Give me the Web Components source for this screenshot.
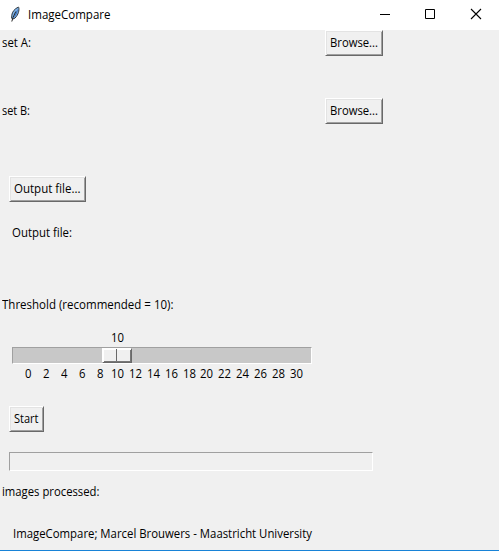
<!DOCTYPE html>
<html lang="en"><head><meta charset="utf-8"><title>ImageCompare</title>
<style>body{margin:0;background:#f0f0f0}</style></head>
<body><image-compare></image-compare>
<script>
const root=(el,html)=>{const t=document.createElement('template');t.innerHTML=html;
  el.attachShadow({mode:'open'}).append(t.content.cloneNode(true));return el.shadowRoot;};

// One line of text condensed to the advance width given in "w".
class FitText extends HTMLElement{
  connectedCallback(){
    if(this.shadowRoot)return;
    const w=+this.getAttribute('w');
    const r=root(this,`<style>:host{display:flex;align-items:center;height:20px;width:${w}px;flex:none}
      span{white-space:pre;flex:none;transform-origin:0 50%;line-height:20px}</style><span></span>`);
    const s=r.querySelector('span');s.textContent=this.getAttribute('text');
    const n=s.getBoundingClientRect().width;
    if(n)s.style.transform=`scaleX(${w/n})`;
  }
}
// Raised classic push button.
class TkButton extends HTMLElement{
  connectedCallback(){
    if(this.shadowRoot)return;
    root(this,`<style>:host{display:block;flex:none}
      button{display:flex;align-items:center;justify-content:flex-start;box-sizing:border-box;font:inherit;color:inherit;
       width:${this.getAttribute('w')}px;height:26px;margin:0;padding:0 0 0 4px;background:#f0f0f0;
       border:1px solid;border-color:#fff #696969 #696969 #fff;box-shadow:inset 1px 1px #e3e3e3,inset -1px -1px #a0a0a0}</style>
      <button><slot></slot></button>`);
  }
}
class TitleBar extends HTMLElement{
  connectedCallback(){
    if(this.shadowRoot)return;
    root(this,`<style>:host{display:flex;height:30px;background:#fff;align-items:center}
      .feather{margin-left:7px;margin-right:5px}.buttons{margin-left:auto;display:flex}svg{display:block}</style>
      <svg class="feather" width="16" height="18" viewBox="0 0 16 18">
       <path d="M11.2 1.2C7.8 2.6 5 6 4.8 9.2L4.6 12l1 1.1 2.4-1C11.5 8.5 12.3 4.5 11.8 1.4Z" fill="#7db2e8" stroke="#303840" stroke-width="1"/>
       <path d="M11 3C10.7 6.5 9.3 9.2 6.8 12L9.6 5Z" fill="#386fbd"/>
       <path d="M8.8 5.5L6 11.5 4.8 15.5" fill="none" stroke="#222" stroke-width="1"/></svg>
      <fit-text text="ImageCompare" w="82.5"></fit-text>
      <div class="buttons">
      <svg width="46" height="30"><path d="M18 14.5h10" stroke="#000"/></svg>
      <svg width="46" height="30"><path d="M17.5 9.5h9v9h-9z" fill="none" stroke="#000"/></svg>
      <svg width="45" height="30"><path d="M17 9l10 10M27 9l-10 10" fill="none" stroke="#000" stroke-width="1.1"/></svg></div>`);
  }
}
class TkScale extends HTMLElement{
  connectedCallback(){
    if(this.shadowRoot)return;
    const ticks=Array.from({length:16},(_,i)=>`<div><fit-text text="${i*2}" w="${i<5?6.5:13}"></fit-text></div>`).join('');
    root(this,`<style>:host{display:block;width:300px;margin-left:12px}
      .value{height:19px;padding-left:98.5px;display:flex;align-items:center}
      .trough{box-sizing:border-box;height:17px;background:#c8c8c8;border:1px solid;border-color:#a0a0a0 #fff #fff #a0a0a0;padding-left:89px}
      .thumb{box-sizing:border-box;width:30px;height:15px;background:#f0f0f0;border:1px solid;border-color:#fff #696969 #696969 #fff;
        box-shadow:inset 1px 1px #fff,inset -1px -1px #777;display:flex;padding-left:13px}
      .thumb i{width:1px;height:12px;background:#696969}
      .ticks{display:grid;grid-template-columns:repeat(16,17.87px);margin-left:7.4px;height:20px}
      .ticks div{display:flex;justify-content:center}</style>
      <div class="value"><fit-text text="10" w="13"></fit-text></div>
      <div class="trough"><div class="thumb"><i></i></div></div><div class="ticks">${ticks}</div>`);
  }
}
class TkProgress extends HTMLElement{
  connectedCallback(){
    if(this.shadowRoot)return;
    root(this,`<style>:host{display:block;box-sizing:border-box;width:364px;height:19px;margin:20px 0 11px 9px;
      border:1px solid;border-color:#a0a0a0 #fff #fff #a0a0a0}</style>`);
  }
}
class ImageCompare extends HTMLElement{
  connectedCallback(){
    if(this.shadowRoot)return;
    root(this,`<style>:host{display:flex;flex-direction:column;box-sizing:border-box;width:499px;height:551px;overflow:hidden;
       background:#f0f0f0;border-bottom:1px solid #1883d7;font:12px "Open Sans","Noto Sans",sans-serif;color:#000}
      .pick{display:flex;width:381px;height:26px;align-items:center;justify-content:space-between;padding-left:2px;margin-bottom:42px}
      .b{margin-bottom:52px}.out{margin-left:9px}</style>
      <title-bar></title-bar>
      <div class="pick"><fit-text text="set A:" w="29"></fit-text><tk-button w="58"><fit-text text="Browse..." w="48"></fit-text></tk-button></div>
      <div class="pick b"><fit-text text="set B:" w="28"></fit-text><tk-button w="58"><fit-text text="Browse..." w="48"></fit-text></tk-button></div>
      <tk-button class="out" w="77"><fit-text text="Output file..." w="66.5"></fit-text></tk-button>
      <fit-text text="Output file:" w="60" style="margin:21px 0 52px 12px"></fit-text>
      <fit-text text="Threshold (recommended = 10):" w="171.5" style="margin:0 0 13px 2px"></fit-text>
      <tk-scale></tk-scale>
      <tk-button class="out" w="35" style="margin-top:22px"><fit-text text="Start" w="24.5"></fit-text></tk-button>
      <tk-progress></tk-progress>
      <fit-text text="images processed:" w="97.5" style="margin-left:2px"></fit-text>
      <fit-text text="ImageCompare; Marcel Brouwers - Maastricht University" w="299" style="margin:22px 0 0 12.5px"></fit-text>`);
  }
}
customElements.define('fit-text',FitText);
customElements.define('tk-button',TkButton);
customElements.define('title-bar',TitleBar);
customElements.define('tk-scale',TkScale);
customElements.define('tk-progress',TkProgress);
customElements.define('image-compare',ImageCompare);
</script></body></html>
